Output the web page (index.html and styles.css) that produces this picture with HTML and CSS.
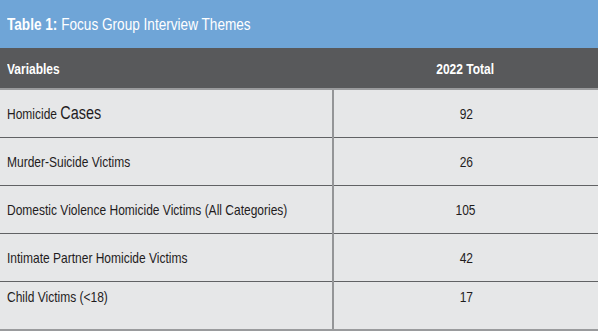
FILE: index.html
```html
<!DOCTYPE html>
<html>
<head>
<meta charset="utf-8">
<link rel="stylesheet" href="styles.css">
</head>
<body>
<div class="wrap">
  <div class="title"><span class="t"><b>Table 1:</b> Focus Group Interview Themes</span></div>
  <table class="tbl">
    <thead>
      <tr><th class="c1"><span class="t">Variables</span></th><th class="c2"><span class="t">2022 Total</span></th></tr>
    </thead>
    <tbody>
      <tr><td class="c1"><span class="t">Homicide <span class="big">Cases</span></span></td><td class="c2"><span class="t">92</span></td></tr>
      <tr><td class="c1"><span class="t">Murder-Suicide Victims</span></td><td class="c2"><span class="t">26</span></td></tr>
      <tr><td class="c1"><span class="t">Domestic Violence Homicide Victims (All Categories)</span></td><td class="c2"><span class="t">105</span></td></tr>
      <tr><td class="c1"><span class="t">Intimate Partner Homicide Victims</span></td><td class="c2"><span class="t">42</span></td></tr>
      <tr class="last"><td class="c1"><span class="t">Child Victims (&lt;18)</span></td><td class="c2"><span class="t">17</span></td></tr>
    </tbody>
  </table>
</div>
</body>
</html>
```
FILE: styles.css
```css
html, body { margin: 0; padding: 0; background: #ffffff; }
body { font-family: "Liberation Sans", Arial, sans-serif; color: #1f1c1d; }
.wrap { width: 598px; }
.t {
  display: inline-block;
  white-space: nowrap;
  transform: scaleX(0.8);
  transform-origin: left center;
}
.c2 .t { transform-origin: center center; }
.title {
  height: 48px;
  box-sizing: border-box;
  background: #6fa5d7;
  color: #ffffff;
  font-size: 17px;
  line-height: 46px;
  padding: 2px 0 0 7px;
}
.title b { font-weight: bold; }
.tbl { width: 598px; border-collapse: collapse; table-layout: fixed; }
.tbl th {
  background: #58595b;
  color: #ffffff;
  font-weight: bold;
  font-size: 15px;
  height: 40px;
  padding: 0;
  border-bottom: 2px solid #9a9b9d;
}
.tbl th.c1 { text-align: left; padding-left: 7px; width: 326px; }
.tbl th.c2 { text-align: center; }
.tbl td {
  background: #e6e7e8;
  font-size: 15px;
  height: 47px;
  padding: 0;
  border-bottom: 1.5px solid #616264;
}
.tbl td.c1 { padding-left: 7px; border-right: 2px solid #949597; }
.tbl td.c2 { text-align: center; }
.big { font-size: 18px; }
.tbl tr.last td { vertical-align: top; padding-top: 6px; height: 41px; border-bottom: 2px solid #9a9b9d; }
```
